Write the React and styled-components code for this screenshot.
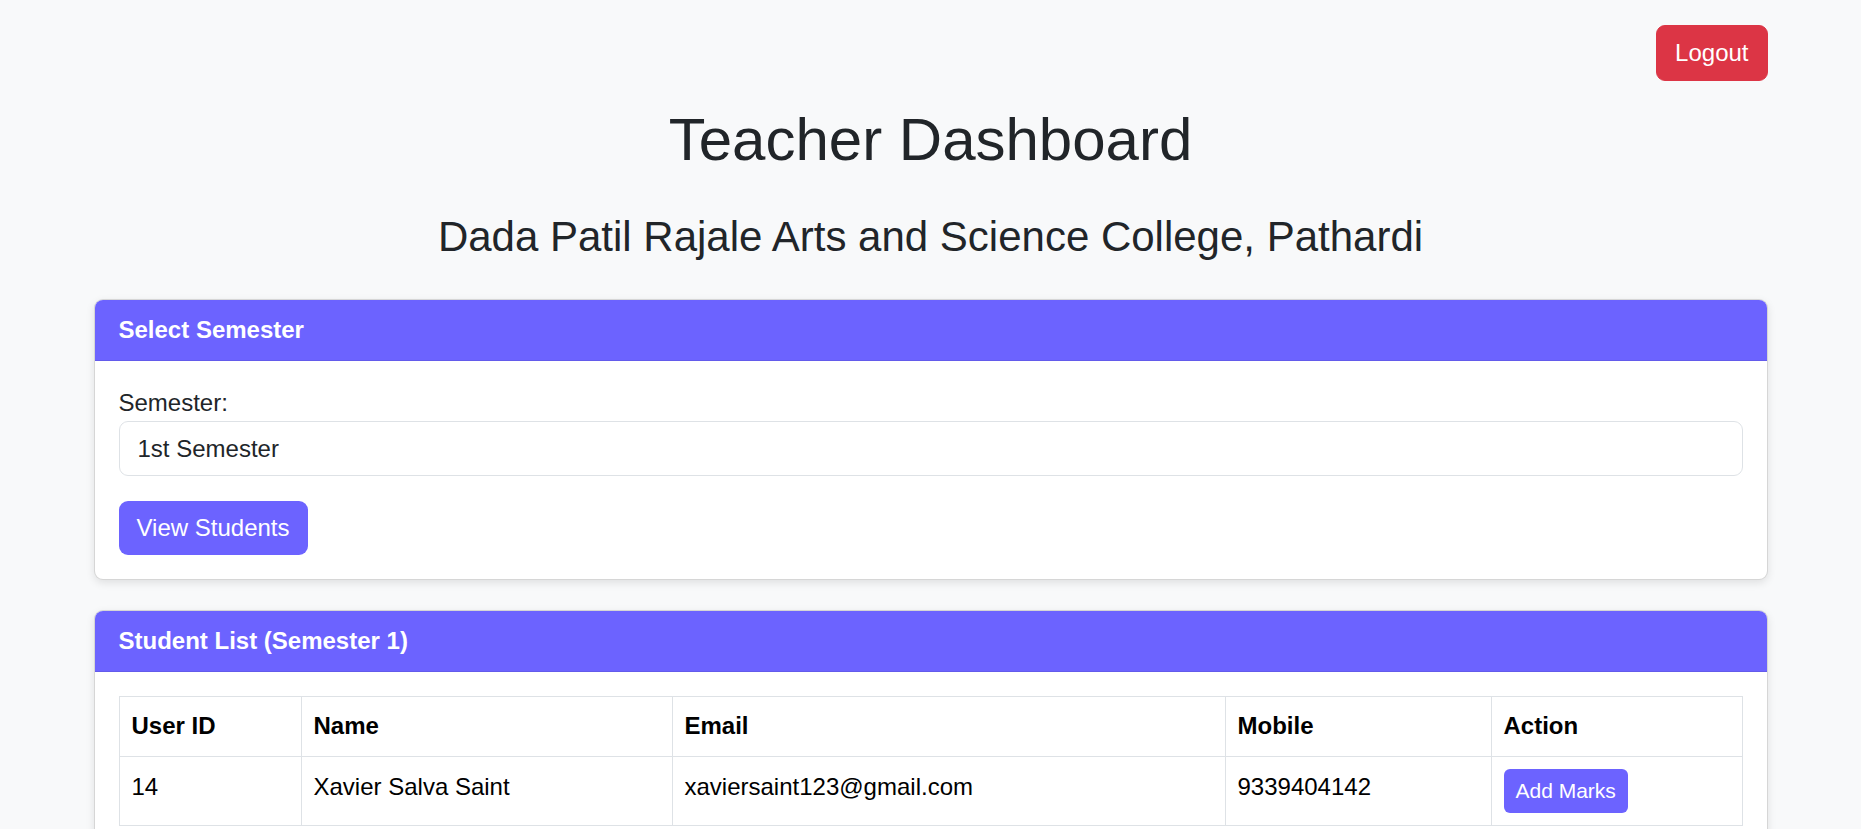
import React from 'react';
import styled, { createGlobalStyle } from 'styled-components';

const GlobalStyle = createGlobalStyle`
  * {
    box-sizing: border-box;
  }

  body {
    margin: 0;
    background: #f8f9fa;
    color: #212529;
    font-family: "Liberation Sans", Arial, sans-serif;
    font-size: 24px;
    line-height: 36px;
  }
`;

const Container = styled.div`
  max-width: 1710px;
  margin: 0 auto;
  padding: 0 18px;
`;

const TopBar = styled.div`
  display: flex;
  justify-content: flex-end;
  padding-top: 25px;
`;

const Button = styled.button`
  font-family: inherit;
  font-size: ${props => (props.small ? '21px' : '24px')};
  line-height: ${props => (props.small ? '32px' : '36px')};
  padding: ${props => (props.small ? '6px 12px' : '9px 18px')};
  color: #fff;
  background: ${props => (props.danger ? '#dc3545' : '#6c63ff')};
  border: ${props => (props.danger ? '1px solid #dc3545' : 'none')};
  border-radius: ${props => (props.small ? '6px' : '9px')};
  cursor: pointer;
  display: inline-block;
`;

const Title = styled.h1`
  margin: 23px 0 36px;
  font-size: 60px;
  font-weight: 400;
  line-height: 1.2;
  text-align: center;
`;

const Subtitle = styled.h3`
  margin: 0 0 37px;
  font-size: 42px;
  font-weight: 400;
  line-height: 1.2;
  text-align: center;
`;

const Card = styled.div`
  background: #fff;
  border: 1px solid rgba(0, 0, 0, 0.16);
  border-radius: 9px;
  box-shadow: 0 3px 9px rgba(0, 0, 0, 0.1);
  overflow: hidden;
  margin-bottom: 30px;
`;

const CardHeader = styled.div`
  background: #6c63ff;
  color: #fff;
  font-weight: 700;
  padding: 12px 24px;
  line-height: 36px;
  border-bottom: 1px solid rgba(0, 0, 0, 0.08);
`;

const CardBody = styled.div`
  padding: 24px;
`;

const Label = styled.label`
  display: block;
`;

const Field = styled.input`
  display: block;
  width: 100%;
  font-family: inherit;
  font-size: 24px;
  line-height: 35px;
  color: #212529;
  padding: 9px 18px;
  border: 1px solid #dee2e6;
  border-radius: 9px;
  background: #fff;
  outline: none;
`;

const FormActions = styled.div`
  margin-top: 25px;
`;

const Table = styled.table`
  width: 100%;
  border-collapse: collapse;
  color: #000;
`;

const HeadCell = styled.th`
  width: ${props => props.w}px;
  text-align: left;
  vertical-align: top;
  font-weight: 700;
  padding: 11px 12px 12px;
  border: 1px solid #dee2e6;
`;

const Cell = styled.td`
  vertical-align: top;
  padding: 12px;
  border: 1px solid #dee2e6;
`;

const students = [
  { id: 14, name: 'Xavier Salva Saint', email: 'xaviersaint123@gmail.com', mobile: '9339404142' },
];

const columns = [
  { label: 'User ID', w: 182 },
  { label: 'Name', w: 371 },
  { label: 'Email', w: 553 },
  { label: 'Mobile', w: 266 },
  { label: 'Action', w: 251 },
];

export default function App() {
  const [semester, setSemester] = React.useState('1st Semester');

  return (
    <>
      <GlobalStyle />
      <Container>
        <TopBar>
          <Button danger>Logout</Button>
        </TopBar>

        <Title>Teacher Dashboard</Title>
        <Subtitle>Dada Patil Rajale Arts and Science College, Pathardi</Subtitle>

        <Card>
          <CardHeader>Select Semester</CardHeader>
          <CardBody>
            <Label htmlFor="semester">Semester:</Label>
            <Field
              id="semester"
              value={semester}
              onChange={e => setSemester(e.target.value)}
            />
            <FormActions>
              <Button>View Students</Button>
            </FormActions>
          </CardBody>
        </Card>

        <Card>
          <CardHeader>Student List (Semester 1)</CardHeader>
          <CardBody>
            <Table>
              <thead>
                <tr>
                  {columns.map(col => (
                    <HeadCell key={col.label} w={col.w}>{col.label}</HeadCell>
                  ))}
                </tr>
              </thead>
              <tbody>
                {students.map(s => (
                  <tr key={s.id}>
                    <Cell>{s.id}</Cell>
                    <Cell>{s.name}</Cell>
                    <Cell>{s.email}</Cell>
                    <Cell>{s.mobile}</Cell>
                    <Cell>
                      <Button small>Add Marks</Button>
                    </Cell>
                  </tr>
                ))}
              </tbody>
            </Table>
          </CardBody>
        </Card>
      </Container>
    </>
  );
}
